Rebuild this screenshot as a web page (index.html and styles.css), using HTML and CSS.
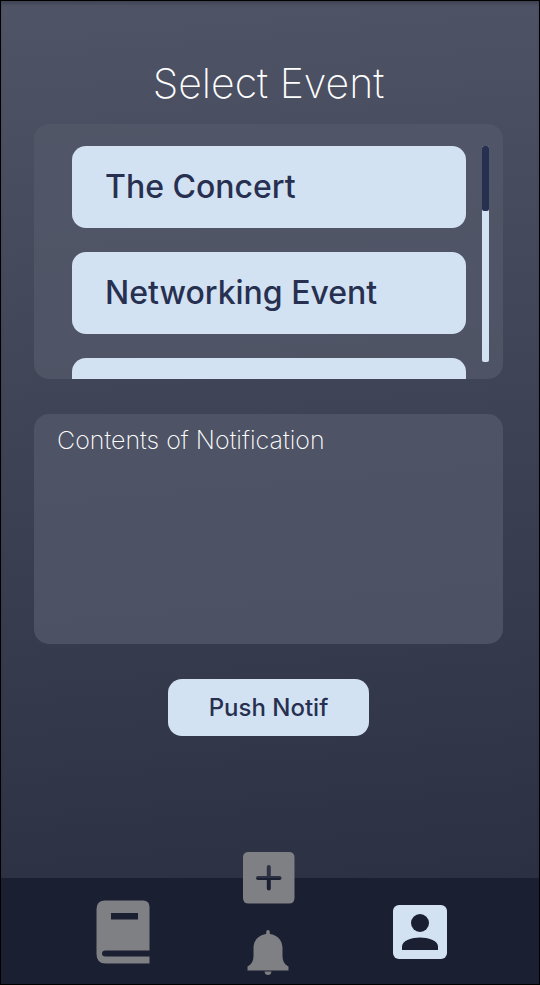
FILE: index.html
```html
<!DOCTYPE html>
<html lang="en">
<head>
<meta charset="utf-8">
<meta name="viewport" content="width=device-width, initial-scale=1">
<title>Select Event</title>
<link rel="stylesheet" href="styles.css">
</head>
<body>
<div class="screen">
  <main class="content">
    <h1 class="title">Select Event</h1>
    <section class="panel events">
      <div class="event-list">
        <button class="event" type="button">The Concert</button>
        <button class="event" type="button">Networking Event</button>
        <button class="event" type="button"></button>
      </div>
      <div class="track"><div class="thumb"></div></div>
    </section>
    <textarea class="panel message" aria-label="Contents of Notification" placeholder="Contents of Notification"></textarea>
    <button class="push" type="button">Push Notif</button>
  </main>
  <nav class="nav">
    <a class="nav-link" href="#book">
      <svg width="54" height="64" viewBox="0 0 54 64"><path fill="#7f8083" fill-rule="evenodd" d="M9 .5H47Q53.500 .5 53.500 7V50.500H9.500Q6 50.500 6 53.500T9.500 56.500H53.500V63.500H9.500Q.5 63.500 .5 54V9Q.5 .5 9 .5ZM15 13V19.500H42V13Z"/></svg>
    </a>
    <a class="nav-link bell" href="#notifications">
      <svg width="42" height="46" viewBox="0 0 42 46"><path fill="#7f8083" d="M21 0Q22.800 0 22.800 2V4C31 5 35.500 11 35.500 18V25C35.500 31 37 34 41.500 36.500V40.500H.5V36.500C5 34 6.500 31 6.500 25V18C6.500 11 11 5 19.200 4V2Q19.200 0 21 0ZM17.500 41.500H24.500Q24 45 21 45T17.500 41.500Z"/></svg>
    </a>
    <a class="nav-link" href="#profile">
      <svg width="54" height="54" viewBox="0 0 54 54"><rect width="54" height="54" rx="6" fill="#d3e2f2"/><circle cx="27" cy="18" r="9" fill="#1a1f32"/><path fill="#1a1f32" d="M9 45V41.500C9 35.500 19 32.500 27 32.500S45 35.500 45 41.500V45Z"/></svg>
    </a>
    <a class="add" href="#add">
      <svg width="52" height="52" viewBox="0 0 52 52"><path fill="#7f8083" fill-rule="evenodd" d="M5.500 0H46Q51.500 0 51.500 5.500V46Q51.500 51.500 46 51.500H5.500Q0 51.500 0 46V5.500Q0 0 5.500 0ZM23.800 15V24H15A2 2 0 0 0 15 28H23.800V36.500A2 2 0 0 0 27.800 36.500V28H36.500A2 2 0 0 0 36.500 24H27.800V15A2 2 0 0 0 23.800 15Z"/></svg>
    </a>
  </nav>
</div>
</body>
</html>
```
FILE: styles.css
```css
* {
  box-sizing: border-box;
}

body {
  margin: 0;
  font-family: Inter, sans-serif;
}

.screen {
  display: flex;
  flex-direction: column;
  min-height: 100vh;
  border: 1px solid #000;
  background: linear-gradient(175deg, #4f5467 0%, #494e61 15%, #272c3f 100%);
  box-shadow: inset 0 4px 4px -2px rgba(0, 0, 0, 0.25);
}

.content {
  flex: 1;
  display: flex;
  flex-direction: column;
  padding: 58px 36px 48px 33px;
}

.title {
  margin: 0 0 16px;
  color: #fff;
  font-size: 41px;
  font-weight: 200;
  line-height: 49px;
  text-align: center;
}

.panel {
  border: 0;
  border-radius: 15px;
  background: rgba(82, 87, 105, 0.8);
}

.events {
  display: flex;
  gap: 16px;
  height: 255px;
  padding: 22px 14px 0 38px;
  overflow: hidden;
}

.event-list {
  flex: 1;
  display: flex;
  flex-direction: column;
  gap: 24px;
}

.event {
  flex: none;
  height: 82px;
  padding: 0 33px;
  border: 0;
  border-radius: 14px;
  background: #d3e2f2;
  color: #273050;
  font: 500 32px/40px Inter, sans-serif;
  text-align: left;
}

.track {
  width: 7px;
  height: 216px;
  border-radius: 2px;
  background: #d3e2f2;
}

.thumb {
  height: 30%;
  border-radius: 2px;
  background: #273050;
}

.message {
  height: 230px;
  margin: 35px 0;
  padding: 11px 23px;
  color: #fff;
  font: 200 25px/30px Inter, sans-serif;
  resize: none;
}

.message::placeholder {
  color: #fff;
  opacity: 1;
}

.push {
  align-self: center;
  padding: 14px 41px;
  border: 0;
  border-radius: 14px;
  background: #d3e2f2;
  color: #273050;
  font: 500 24px/29px Inter, sans-serif;
}

.nav {
  position: relative;
  display: grid;
  grid-template-columns: 145fr 145fr 158fr;
  align-items: center;
  justify-items: center;
  height: 106px;
  padding: 2px 40px 0 49px;
  background: #1a1f32;
}

.nav-link,
.add {
  display: flex;
}

.bell {
  align-self: end;
  padding-bottom: 8px;
}

.add {
  position: absolute;
  top: -26px;
  left: 45%;
}
```
